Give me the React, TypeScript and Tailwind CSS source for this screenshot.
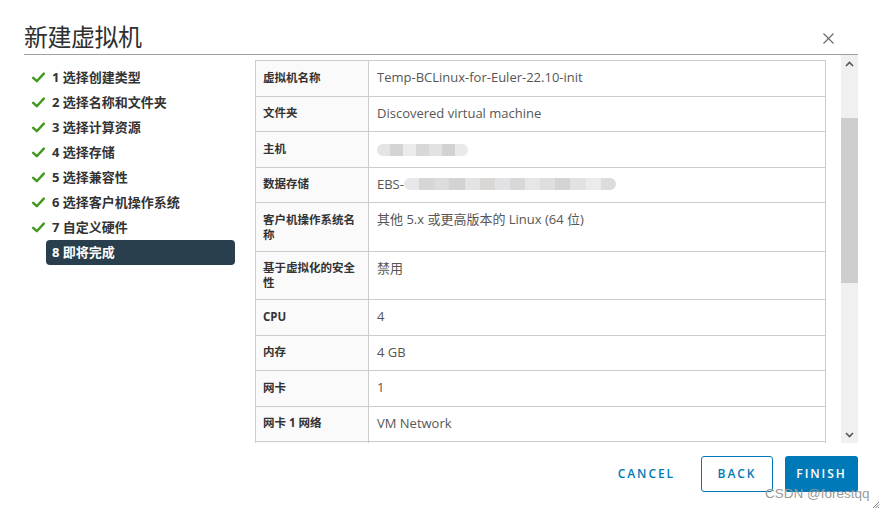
import React from "react";

const steps = [
  "1 选择创建类型",
  "2 选择名称和文件夹",
  "3 选择计算资源",
  "4 选择存储",
  "5 选择兼容性",
  "6 选择客户机操作系统",
  "7 自定义硬件",
  "8 即将完成",
];

type Row = { label: string; value?: string; blur?: "host" | "store" };

const rows: Row[] = [
  { label: "虚拟机名称", value: "Temp-BCLinux-for-Euler-22.10-init" },
  { label: "文件夹", value: "Discovered virtual machine" },
  { label: "主机", blur: "host" },
  { label: "数据存储", blur: "store" },
  { label: "客户机操作系统名称", value: "其他 5.x 或更高版本的 Linux (64 位)" },
  { label: "基于虚拟化的安全性", value: "禁用" },
  { label: "CPU", value: "4" },
  { label: "内存", value: "4 GB" },
  { label: "网卡", value: "1" },
  { label: "网卡 1 网络", value: "VM Network" },
];

const hostShades = ["#e4e4e4", "#d4d4d4", "#ebebeb", "#d8d8d8", "#e2e2e2", "#d2d2d2", "#e9e9e9"];
const storeShades = [
  "#e8e8ec", "#d6d6d6", "#dcdcdc", "#d3d3d3", "#e4e4e4", "#dad6d4", "#e0e2e6",
  "#d8d8d8", "#e6e6e6", "#dedede", "#d4d4d4", "#e2e2e2", "#ebebeb", "#dcdcdc",
];

const Blur = ({ shades, width }: { shades: string[]; width: number }) => (
  <span className="inline-flex h-[12px] rounded-full overflow-hidden blur-[0.6px] align-middle" style={{ width }}>
    {shades.map((c, i) => (
      <span key={i} className="flex-1 h-full" style={{ backgroundColor: c }} />
    ))}
  </span>
);

const Check = () => (
  <svg width="13" height="11" viewBox="0 0 13 11">
    <path d="M1.2 5.8 L4.8 9.2 L11.8 1.6" fill="none" stroke="#3f9a1c" strokeWidth="2.4" strokeLinecap="round" strokeLinejoin="round" />
  </svg>
);

const App = () => {
  return (
    <div
      className="relative w-[882px] h-[511px] bg-white overflow-hidden text-[#333]"
      style={{ fontFamily: '"Open Sans", "Noto Sans CJK SC", sans-serif' }}
    >
      {/* header */}
      <div className="flex items-end justify-between ml-[24px] mr-[24px] h-[55px] border-b border-[#a0a0a0]">
        <div className="text-[24px] leading-[30px] pb-[3px] text-[#2f2f2f] font-normal tracking-[-0.5px]" style={{ fontFamily: '"Noto Sans CJK SC", sans-serif' }}>
          新建虚拟机
        </div>
        <button className="mr-[24px] mb-[10px] w-[12px] h-[12px] flex items-center justify-center">
          <svg width="11" height="11" viewBox="0 0 11 11">
            <path d="M0.5 0.5 L10.5 10.5 M10.5 0.5 L0.5 10.5" stroke="#666" strokeWidth="1.1" />
          </svg>
        </button>
      </div>

      {/* body */}
      <div className="flex h-[388px]">
        <nav className="w-[241px] pt-[10px] pl-[24px] shrink-0">
          {steps.map((s, i) => {
            const active = i === steps.length - 1;
            return (
              <div key={s} className="flex items-center h-[25px]">
                <div className="w-[22px] shrink-0 pl-[8px] flex items-center">{!active && <Check />}</div>
                <div
                  className={
                    active
                      ? "w-[189px] shrink-0 h-[25px] flex items-center px-[6px] rounded-[4px] bg-[#293f4d] text-white text-[13px] font-bold"
                      : "w-[189px] shrink-0 h-[25px] flex items-center px-[6px] text-[13px] font-bold text-[#333]"
                  }
                >
                  {s}
                </div>
              </div>
            );
          })}
        </nav>

        <div className="w-[571px] ml-[14px] pt-[5px] overflow-hidden shrink-0">
          <div className="border border-[#cccccc] border-b-0">
            {rows.map((r) => (
              <div key={r.label} className="flex border-b border-[#cccccc]">
                <div className="w-[113px] shrink-0 bg-[#fafafa] border-r border-[#cccccc] pl-[7px] pr-[11px] pt-[8.5px] pb-[9px] text-[11.5px] leading-[15px] font-bold text-[#333]">
                  {r.label}
                </div>
                <div className="flex-1 pl-[8px] pt-[8px] pb-[10.5px] text-[13px] leading-[16px] text-[#565656]">
                  {r.value}
                  {r.blur === "host" && <Blur shades={hostShades} width={91} />}
                  {r.blur === "store" && (
                    <span className="inline-flex items-center">
                      EBS-
                      <Blur shades={storeShades} width={212} />
                    </span>
                  )}
                </div>
              </div>
            ))}
            <div className="flex h-[20px]">
              <div className="w-[113px] shrink-0 bg-[#fafafa] border-r border-[#cccccc]" />
              <div className="flex-1" />
            </div>
          </div>
        </div>

        {/* scrollbar */}
        <div className="ml-[15px] w-[17px] h-[388px] bg-[#f0f0f0] flex flex-col shrink-0">
          <div className="h-[17px] flex items-center justify-center">
            <svg width="9" height="6" viewBox="0 0 9 6">
              <path d="M1 5 L4.5 1.5 L8 5" fill="none" stroke="#555" strokeWidth="1.6" />
            </svg>
          </div>
          <div className="mt-[46px] h-[165px] bg-[#cdcdcd]" />
          <div className="flex-1" />
          <div className="h-[17px] flex items-center justify-center">
            <svg width="9" height="6" viewBox="0 0 9 6">
              <path d="M1 1 L4.5 4.5 L8 1" fill="none" stroke="#555" strokeWidth="1.6" />
            </svg>
          </div>
        </div>
      </div>

      {/* footer */}
      <div className="flex justify-end items-center gap-[12px] pt-[13px] pr-[24px]">
        <button className="h-[36px] px-[12px] mr-[2px] text-[12px] font-semibold tracking-[0.16em] text-[#0079b8]">
          CANCEL
        </button>
        <button className="h-[36px] w-[72px] rounded-[3px] border border-[#0079b8] text-[12px] font-semibold tracking-[0.16em] text-[#0079b8]">
          BACK
        </button>
        <button className="h-[36px] w-[73px] rounded-[3px] bg-[#0079b8] text-[12px] font-semibold tracking-[0.16em] text-white">
          FINISH
        </button>
      </div>

      {/* watermark */}
      <div
        className="absolute left-[765px] top-[486px] text-[13.5px] leading-[16px] text-[#9a9a9a]"
        style={{ fontFamily: '"Liberation Sans", sans-serif' }}
      >
        CSDN @forestqq
      </div>

      {/* resize grip */}
      <svg className="absolute right-[2px] bottom-[2px]" width="8" height="8" viewBox="0 0 8 8">
        <path d="M7 1 L1 7 M7 3.5 L3.5 7 M7 6 L6 7" stroke="#777" strokeWidth="0.9" />
      </svg>
    </div>
  );
};

export default App;
